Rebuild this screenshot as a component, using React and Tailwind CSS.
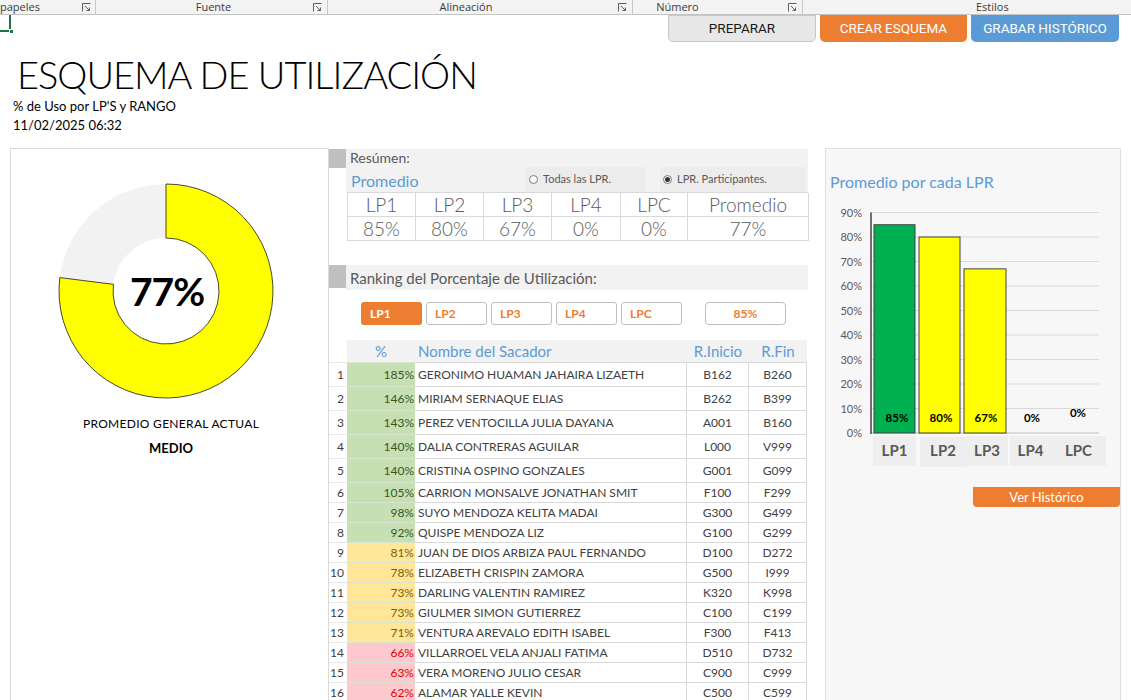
import React from 'react';

const rows = [
  { n: 1, p: '185%', name: 'GERONIMO HUAMAN JAHAIRA LIZAETH', ini: 'B162', fin: 'B260', lvl: 'g' },
  { n: 2, p: '146%', name: 'MIRIAM SERNAQUE ELIAS', ini: 'B262', fin: 'B399', lvl: 'g' },
  { n: 3, p: '143%', name: 'PEREZ VENTOCILLA JULIA DAYANA', ini: 'A001', fin: 'B160', lvl: 'g' },
  { n: 4, p: '140%', name: 'DALIA CONTRERAS AGUILAR', ini: 'L000', fin: 'V999', lvl: 'g' },
  { n: 5, p: '140%', name: 'CRISTINA OSPINO GONZALES', ini: 'G001', fin: 'G099', lvl: 'g' },
  { n: 6, p: '105%', name: 'CARRION MONSALVE JONATHAN SMIT', ini: 'F100', fin: 'F299', lvl: 'g' },
  { n: 7, p: '98%', name: 'SUYO MENDOZA KELITA MADAI', ini: 'G300', fin: 'G499', lvl: 'g' },
  { n: 8, p: '92%', name: 'QUISPE MENDOZA LIZ', ini: 'G100', fin: 'G299', lvl: 'g' },
  { n: 9, p: '81%', name: 'JUAN DE DIOS ARBIZA PAUL FERNANDO', ini: 'D100', fin: 'D272', lvl: 'y' },
  { n: 10, p: '78%', name: 'ELIZABETH CRISPIN ZAMORA', ini: 'G500', fin: 'I999', lvl: 'y' },
  { n: 11, p: '73%', name: 'DARLING VALENTIN RAMIREZ', ini: 'K320', fin: 'K998', lvl: 'y' },
  { n: 12, p: '73%', name: 'GIULMER SIMON GUTIERREZ', ini: 'C100', fin: 'C199', lvl: 'y' },
  { n: 13, p: '71%', name: 'VENTURA AREVALO EDITH ISABEL', ini: 'F300', fin: 'F413', lvl: 'y' },
  { n: 14, p: '66%', name: 'VILLARROEL VELA ANJALI FATIMA', ini: 'D510', fin: 'D732', lvl: 'r' },
  { n: 15, p: '63%', name: 'VERA MORENO JULIO CESAR', ini: 'C900', fin: 'C999', lvl: 'r' },
  { n: 16, p: '62%', name: 'ALAMAR YALLE KEVIN', ini: 'C500', fin: 'C599', lvl: 'r' },
];

const levelClass = {
  g: 'bg-[#c6e0b4] text-[#375623]',
  y: 'bg-[#ffe699] text-[#7f6000]',
  r: 'bg-[#ffc7ce] text-[#e00000]',
};

const Launcher = () => (
  <svg width="9" height="9" viewBox="0 0 9 9" className="shrink-0">
    <path d="M0.5 8.5 V0.5 H8.5" fill="none" stroke="#5f5f5f" strokeWidth="1" />
    <path d="M3 3 L7.5 7.5 M7.5 4.5 V7.5 H4.5" fill="none" stroke="#5f5f5f" strokeWidth="1" />
  </svg>
);

const Donut = () => {
  const cx = 108;
  const cy = 108;
  const R = 107;
  const r = 53;
  const a = 0.77 * Math.PI * 2;
  const ox = cx + R * Math.sin(a);
  const oy = cy - R * Math.cos(a);
  const ix = cx + r * Math.sin(a);
  const iy = cy - r * Math.cos(a);
  const d = `M ${cx} ${cy - R} A ${R} ${R} 0 1 1 ${ox} ${oy} L ${ix} ${iy} A ${r} ${r} 0 1 0 ${cx} ${cy - r} Z`;
  return (
    <div className="relative w-[216px] h-[216px]">
      <svg width="216" height="216" viewBox="0 0 216 216">
        <circle cx={cx} cy={cy} r={(R + r) / 2} fill="none" stroke="#f2f2f2" strokeWidth={R - r} />
        <path d={d} fill="#ffff00" stroke="#1a1a1a" strokeWidth="0.8" />
      </svg>
      <div className="absolute inset-0 flex items-center justify-center text-[39px] font-bold text-black tracking-[-1px] pl-[2px]">
        77%
      </div>
    </div>
  );
};

const BarChart = () => {
  const grid = [0, 1, 2, 3, 4, 5, 6, 7, 8, 9];
  const base = 233;
  const step = 24.5;
  const bars = [
    { x: 48, w: 41, v: 85, fill: '#00b050' },
    { x: 93, w: 41, v: 80, fill: '#ffff00' },
    { x: 138, w: 42, v: 67, fill: '#ffff00' },
  ];
  const labels = [
    { x: 71, t: '85%' },
    { x: 115, t: '80%' },
    { x: 160, t: '67%' },
    { x: 206, t: '0%' },
    { x: 252, t: '0%', y: 217 },
  ];
  const cats = [
    { x: 47, w: 43, y: 236, t: 'LP1' },
    { x: 94, w: 46, y: 237, t: 'LP2', ty: 256 },
    { x: 140, w: 42, y: 236, t: 'LP3' },
    { x: 184, w: 41, y: 236, t: 'LP4' },
    { x: 225, w: 55, y: 236, t: 'LPC' },
  ];
  return (
    <svg width="296" height="272" viewBox="0 0 296 272" className="block">
      {grid.map((k) => (
        <g key={k}>
          <line x1="45" x2="273" y1={base - k * step} y2={base - k * step} stroke={k === 0 ? '#bfbfbf' : '#d9d9d9'} strokeWidth="1" />
          <text x="36" y={base - k * step + 4} textAnchor="end" fontSize="11" fill="#595959">
            {k * 10}%
          </text>
        </g>
      ))}
      <line x1="45" x2="45" y1={base - 9 * step} y2={base + 1} stroke="#404040" strokeWidth="1.5" />
      {bars.map((b) => (
        <rect key={b.x} x={b.x} y={base - (b.v / 10) * step} width={b.w} height={(b.v / 10) * step} fill={b.fill} stroke="#404040" strokeWidth="1" />
      ))}
      {labels.map((l) => (
        <text key={l.x} x={l.x} y={l.y || 222} textAnchor="middle" fontSize="11.5" fontWeight="700" fill="#000">
          {l.t}
        </text>
      ))}
      {cats.map((c) => (
        <g key={c.t}>
          <rect x={c.x} y={c.y} width={c.w} height="30" fill="#eeeeee" />
          <text x={c.x + c.w / 2} y={c.ty || 256} textAnchor="middle" fontSize="15" fontWeight="700" fill="#595959">
            {c.t}
          </text>
        </g>
      ))}
    </svg>
  );
};

export default function App() {
  return (
    <div className="relative w-[1131px] h-[700px] overflow-hidden bg-white font-['Lato',sans-serif] text-[#262626]">
      {/* Ribbon group labels */}
      <div className="flex h-[15px] bg-[#f3f3f3] border-b border-[#c3c3c3] text-[11px] leading-[14px] text-[#3a3a3a] font-['Open_Sans',sans-serif]">
        <div className="w-[96px] flex items-center justify-between pr-[4px] border-r border-[#c8c8c8]">
          <span>papeles</span>
          <Launcher />
        </div>
        <div className="w-[232px] flex items-center pr-[5px] border-r border-[#c8c8c8]">
          <span className="flex-1 text-center pl-[18px]">Fuente</span>
          <Launcher />
        </div>
        <div className="w-[305px] flex items-center pr-[5px] border-r border-[#c8c8c8]">
          <span className="flex-1 text-center pr-[14px]">Alineación</span>
          <Launcher />
        </div>
        <div className="w-[170px] flex items-center pr-[5px] border-r border-[#c8c8c8]">
          <span className="flex-1 text-center pr-[66px]">Número</span>
          <Launcher />
        </div>
        <div className="flex-1 flex items-center">
          <span className="pl-[173px]">Estilos</span>
        </div>
      </div>

      {/* Excel cell cursor */}
      <div className="absolute left-0 top-[15px] w-[11px] h-[17px] border-r-2 border-b-2 border-[#217346]" />
      <div className="absolute left-[9px] top-[29px] w-[5px] h-[5px] bg-[#217346] border border-white" />

      {/* Header */}
      <div className="flex h-[133px]">
        <div className="flex-1 flex flex-col pl-[13px]">
          <div className="mt-[35px] ml-[4px] text-[38px] leading-[48px] font-light text-black tracking-[-1px]">
            ESQUEMA DE UTILIZACIÓN
          </div>
          <div className="text-[13px] leading-[16px] text-black">% de Uso por LP'S y RANGO</div>
          <div className="mt-[3px] text-[13px] leading-[16px] text-black">11/02/2025 06:32</div>
        </div>
        <div className="flex items-start gap-[4px] pr-[12px] font-['Liberation_Sans_Narrow','Roboto',sans-serif] text-[13.5px]">
          <button className="w-[148px] h-[27px] bg-[#e7e7e7] border border-[#c8c8c8] rounded-b-[5px] text-[#1a1a1a]">PREPARAR</button>
          <button className="w-[147px] h-[27px] bg-[#ed7d31] rounded-b-[5px] text-white">CREAR ESQUEMA</button>
          <button className="w-[148px] h-[27px] bg-[#5b9bd5] rounded-b-[5px] text-white">GRABAR HISTÓRICO</button>
        </div>
      </div>

      {/* Main */}
      <div className="flex items-start pl-[10px]">
        {/* Left panel */}
        <div className="w-[319px] h-[560px] border border-[#d9d9d9] flex flex-col">
          <div className="ml-[47px] mt-[34px] w-[226px] flex flex-col items-start">
            <Donut />
            <div className="w-[226px] text-center mt-[17px] text-[12px] leading-[16px] text-black tracking-[0.3px]">
              PROMEDIO GENERAL ACTUAL
            </div>
            <div className="w-[226px] text-center mt-[8px] text-[13px] leading-[16px] font-bold text-black">MEDIO</div>
          </div>
        </div>

        {/* Middle */}
        <div className="w-[479px] flex flex-col pt-[1px]">
          {/* Resumen */}
          <div className="flex">
            <div className="w-[17px] h-[19px] bg-[#bfbfbf]" />
            <div className="flex-1 h-[43px] bg-[#f2f2f2] flex flex-col pl-[4px]">
              <div className="h-[18px] text-[14px] leading-[18px] text-[#595959]">Resúmen:</div>
              <div className="flex items-end">
                <div className="w-[175px] text-[16px] leading-[22px] text-[#5b9bd5] pl-[1px]">Promedio</div>
                <div className="w-[120px] h-[25px] bg-[#ececec] flex items-center pl-[4px] gap-[5px] text-[11px] text-[#595959]">
                  <span className="w-[9px] h-[9px] rounded-full border border-[#7a7a7a] bg-white" />
                  Todas las LPR.
                </div>
                <div className="w-[15px]" />
                <div className="w-[145px] h-[25px] bg-[#ececec] flex items-center pl-[3px] gap-[5px] text-[11px] text-[#595959]">
                  <span className="w-[9px] h-[9px] rounded-full border border-[#7a7a7a] bg-white flex items-center justify-center">
                    <span className="w-[5px] h-[5px] rounded-full bg-[#333]" />
                  </span>
                  LPR. Participantes.
                </div>
              </div>
            </div>
          </div>
          <div className="ml-[18px] w-[461px] grid grid-cols-[68px_68px_68px_69px_67px_121px] border-l border-t border-[#d9d9d9] text-[19px] font-light text-[#595959]">
            {['LP1', 'LP2', 'LP3', 'LP4', 'LPC', 'Promedio', '85%', '80%', '67%', '0%', '0%', '77%'].map((t, i) => (
              <div key={i} className="h-[24px] leading-[23px] text-center border-r border-b border-[#d9d9d9]">
                {t}
              </div>
            ))}
          </div>

          {/* Ranking */}
          <div className="flex mt-[24px]">
            <div className="w-[17px] h-[23px] bg-[#bfbfbf]" />
            <div className="flex-1 h-[25px] bg-[#f2f2f2] pl-[4px] text-[15px] leading-[26px] text-[#595959]">
              Ranking del Porcentaje de Utilización:
            </div>
          </div>
          <div className="flex items-center mt-[12px] ml-[32px] gap-[4px] text-[12px] font-bold">
            <div className="w-[61px] h-[23px] rounded-[3px] bg-[#ed7d31] text-white flex items-center pl-[9px]">LP1</div>
            {['LP2', 'LP3', 'LP4', 'LPC'].map((t) => (
              <div key={t} className="w-[61px] h-[23px] rounded-[3px] border border-[#bfbfbf] bg-white text-[#ed7d31] flex items-center pl-[8px]">
                {t}
              </div>
            ))}
            <div className="ml-[19px] w-[81px] h-[23px] rounded-[4px] border border-[#bfbfbf] bg-white text-[#ed7d31] flex items-center justify-center">
              85%
            </div>
          </div>

          {/* Ranking table */}
          <div className="mt-[15px] flex flex-col">
            <div className="flex h-[22px] text-[15px] leading-[22px] text-[#5b9bd5]">
              <div className="w-[18px]" />
              <div className="w-[68px] bg-[#f2f2f2] text-center">%</div>
              <div className="w-[272px] bg-[#f2f2f2] pl-[3px]">Nombre del Sacador</div>
              <div className="w-[62px] bg-[#f2f2f2] text-center">R.Inicio</div>
              <div className="w-[58px] bg-[#f2f2f2] text-center">R.Fin</div>
            </div>
            {rows.map((r) => (
              <div key={r.n} className={`flex text-[12px] ${r.n <= 5 ? 'h-[24px]' : 'h-[20px]'}`}>
                <div className="w-[18px] flex items-center justify-end pr-[3px] text-[#404040] border-t border-[#e7e7e7]">{r.n}</div>
                <div className={`w-[68px] flex items-center justify-end pr-[1px] border-t border-[#d9e6cf] ${levelClass[r.lvl]}`}>{r.p}</div>
                <div className="w-[272px] flex items-center pl-[3px] text-[#404040] border-t border-r border-[#d9d9d9] whitespace-nowrap overflow-hidden">
                  {r.name}
                </div>
                <div className="w-[62px] flex items-center justify-center text-[#404040] border-t border-r border-[#d9d9d9]">{r.ini}</div>
                <div className="w-[58px] flex items-center justify-center text-[#404040] border-t border-r border-[#d9d9d9]">{r.fin}</div>
              </div>
            ))}
          </div>
        </div>

        {/* Right panel */}
        <div className="ml-[17px] w-[296px] h-[560px] bg-[#f7f7f7] border border-[#e0e0e0] flex flex-col">
          <div className="mt-[23px] pl-[4px] text-[16px] leading-[20px] text-[#5b9bd5]">Promedio por cada LPR</div>
          <div className="mt-[8px]">
            <BarChart />
          </div>
          <div className="flex justify-end mt-[15px]">
            <div className="w-[147px] h-[20px] bg-[#ed7d31] rounded-b-[4px] text-white text-[13px] leading-[20px] text-center">
              Ver Histórico
            </div>
          </div>
        </div>
      </div>
    </div>
  );
}
